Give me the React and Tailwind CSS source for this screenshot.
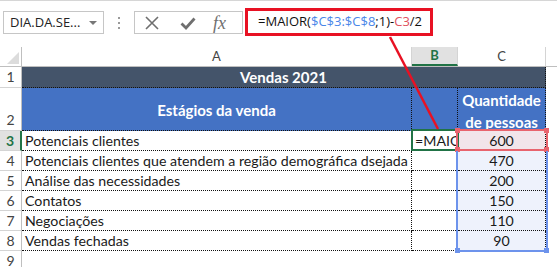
import React from 'react'

const ROWS = [
  { n: 3, label: 'Potenciais clientes', qty: '600' },
  { n: 4, label: 'Potenciais clientes que atendem a região demográfica dsejada', qty: '470' },
  { n: 5, label: 'Análise das necessidades', qty: '200' },
  { n: 6, label: 'Contatos', qty: '150' },
  { n: 7, label: 'Negociações', qty: '110' },
  { n: 8, label: 'Vendas fechadas', qty: '90' },
]

function RowHead({ n, h, active, align = 'items-center' }) {
  return (
    <div
      className={`w-[22px] shrink-0 flex justify-center ${align} border-b border-[#d4d4d4] ${
        active ? 'bg-[#e1e1e1] text-[#217346] font-bold border-r-2 border-r-[#217346]' : 'border-r border-r-[#bfbfbf] text-[#444]'
      } ${h}`}
    >
      <span className="text-[14px] leading-none">{n}</span>
    </div>
  )
}

export default function App() {
  return (
    <div className="relative w-[557px] h-[267px] bg-white overflow-hidden font-['Lato',sans-serif] text-[#1a1a1a]">
      {/* toolbar */}
      <div className="h-[47px] border-t border-[#d6d6d6] flex items-start">
        <div className="mt-[10px] ml-[3px] w-[101px] h-[23px] border border-[#c6c6c6] flex items-center justify-between pl-[6px] pr-[6px] font-['Open_Sans',sans-serif] text-[13px] text-[#222]">
          <span>DIA.DA.SE...</span>
          <span className="w-0 h-0 border-l-[4px] border-r-[4px] border-t-[4px] border-l-transparent border-r-transparent border-t-[#777]" />
        </div>
        <div className="mt-[16px] ml-[14px] flex flex-col gap-[3px]">
          <span className="w-[2px] h-[2px] bg-[#9a9a9a]" />
          <span className="w-[2px] h-[2px] bg-[#9a9a9a]" />
          <span className="w-[2px] h-[2px] bg-[#9a9a9a]" />
        </div>
        <div className="mt-[10px] ml-[14px] w-[109px] h-[23px] border border-[#c6c6c6] flex items-center">
          <svg className="ml-[9px]" width="16" height="16" viewBox="0 0 16 16">
            <path d="M2 2 L14 14 M14 2 L2 14" stroke="#6f6f6f" strokeWidth="1.6" fill="none" />
          </svg>
          <svg className="ml-[20px]" width="16" height="16" viewBox="0 0 16 16">
            <path d="M1.5 8.5 L6 13 L14.5 3.5" stroke="#6f6f6f" strokeWidth="2.8" fill="none" strokeLinejoin="miter" />
          </svg>
          <span className="ml-[17px] font-['Liberation_Serif',serif] italic text-[18px] text-[#6f6f6f] leading-none">fx</span>
        </div>
        <div className="mt-[7px] ml-[2px] w-[188px] h-[28px] border-[3px] border-[#e81123] flex items-center pl-[10px] font-['Open_Sans',sans-serif] text-[13px] text-[#111] whitespace-nowrap">
          <span>=MAIOR(</span>
          <span className="text-[#4a86e8]">$C$3:$C$8</span>
          <span>;1)-</span>
          <span className="text-[#e05260]">C3</span>
          <span>/2</span>
        </div>
      </div>

      {/* column headers */}
      <div className="flex h-[20px] border-b border-[#bfbfbf] text-[13px] text-[#444]">
        <div className="w-[22px] shrink-0 border-r border-[#bfbfbf] relative">
          <svg className="absolute right-[2px] bottom-[2px]" width="12" height="12" viewBox="0 0 12 12">
            <polygon points="12,0 12,12 0,12" fill="#dcdcdc" />
          </svg>
        </div>
        <div className="w-[390px] shrink-0 flex items-center justify-center border-r border-[#d4d4d4]">A</div>
        <div className="w-[46px] shrink-0 flex items-center justify-center bg-[#e1e1e1] border-b-2 border-[#217346] text-[#217346] font-bold border-r border-r-[#d4d4d4]">B</div>
        <div className="w-[88px] shrink-0 flex items-center justify-center border-r border-[#d4d4d4]">C</div>
        <div className="flex-1" />
      </div>

      {/* row 1 */}
      <div className="flex h-[21px]">
        <RowHead n={1} h="h-[21px]" />
        <div className="w-[524px] shrink-0 bg-[#44546a] text-white font-bold text-[15px] flex items-center justify-center border-r border-b border-dotted border-[#111]">
          Vendas 2021
        </div>
      </div>

      {/* row 2 */}
      <div className="flex h-[43px]">
        <RowHead n={2} h="h-[43px]" align="items-end pb-[3px]" />
        <div className="w-[390px] shrink-0 bg-[#4472c4] text-white font-bold text-[15px] flex items-center justify-center border-r border-b border-dotted border-[#111] pt-[3px]">
          Estágios da venda
        </div>
        <div className="w-[46px] shrink-0 bg-[#4472c4] border-r border-b border-dotted border-[#111]" />
        <div className="w-[88px] shrink-0 bg-[#4472c4] text-white font-bold text-[15px] leading-[22px] pt-[3px] flex flex-col items-center justify-center border-r border-b border-dotted border-[#111]">
          <span>Quantidade</span>
          <span>de pessoas</span>
        </div>
      </div>

      {/* data rows */}
      {ROWS.map((r) => (
        <div key={r.n} className="flex h-[20px] text-[14.2px]">
          <RowHead n={r.n} h="h-[20px]" active={r.n === 3} />
          <div className="w-[390px] shrink-0 flex items-center pl-[3px] whitespace-nowrap border-r border-b border-dotted border-[#111]">
            {r.label}
          </div>
          <div className="w-[46px] shrink-0 border-r border-b border-dotted border-[#111] flex items-center overflow-hidden whitespace-nowrap pl-[3px]">
            {r.n === 3 ? '=MAIO' : ''}
          </div>
          <div
            className={`w-[88px] shrink-0 flex items-center justify-center border-r border-b border-dotted border-[#111] ${
              r.n === 3 ? 'bg-[#f2e5ea]' : 'bg-[#eef2fc]'
            }`}
          >
            {r.qty}
          </div>
        </div>
      ))}

      {/* row 9 */}
      <div className="flex h-[20px]">
        <RowHead n={9} h="h-[20px]" />
      </div>

      {/* selection + reference highlights */}
      <div className="absolute left-[411px] top-[129px] w-[48px] h-[22px] border-2 border-[#217346]" />
      <div className="absolute left-[456px] top-[129px] w-[92px] h-[22px] border-2 border-[#e8646e]">
        <span className="absolute -left-[3px] -top-[3px] w-[5px] h-[5px] bg-[#e8646e]" />
        <span className="absolute -right-[3px] -top-[3px] w-[5px] h-[5px] bg-[#e8646e]" />
        <span className="absolute -left-[3px] -bottom-[3px] w-[5px] h-[5px] bg-[#e8646e]" />
        <span className="absolute -right-[3px] -bottom-[3px] w-[5px] h-[5px] bg-[#e8646e]" />
      </div>
      <div className="absolute left-[456px] top-[151px] w-[92px] h-[101px] border-2 border-t-0 border-[#6d93ec]">
        <span className="absolute -left-[3px] -bottom-[3px] w-[5px] h-[5px] bg-[#6d93ec]" />
        <span className="absolute -right-[3px] -bottom-[3px] w-[5px] h-[5px] bg-[#6d93ec]" />
      </div>

      {/* arrow line from formula box to cell */}
      <svg className="absolute left-0 top-0 pointer-events-none" width="557" height="267">
        <line x1="390" y1="37" x2="438" y2="129" stroke="#e81123" strokeWidth="2.5" />
      </svg>
    </div>
  )
}
